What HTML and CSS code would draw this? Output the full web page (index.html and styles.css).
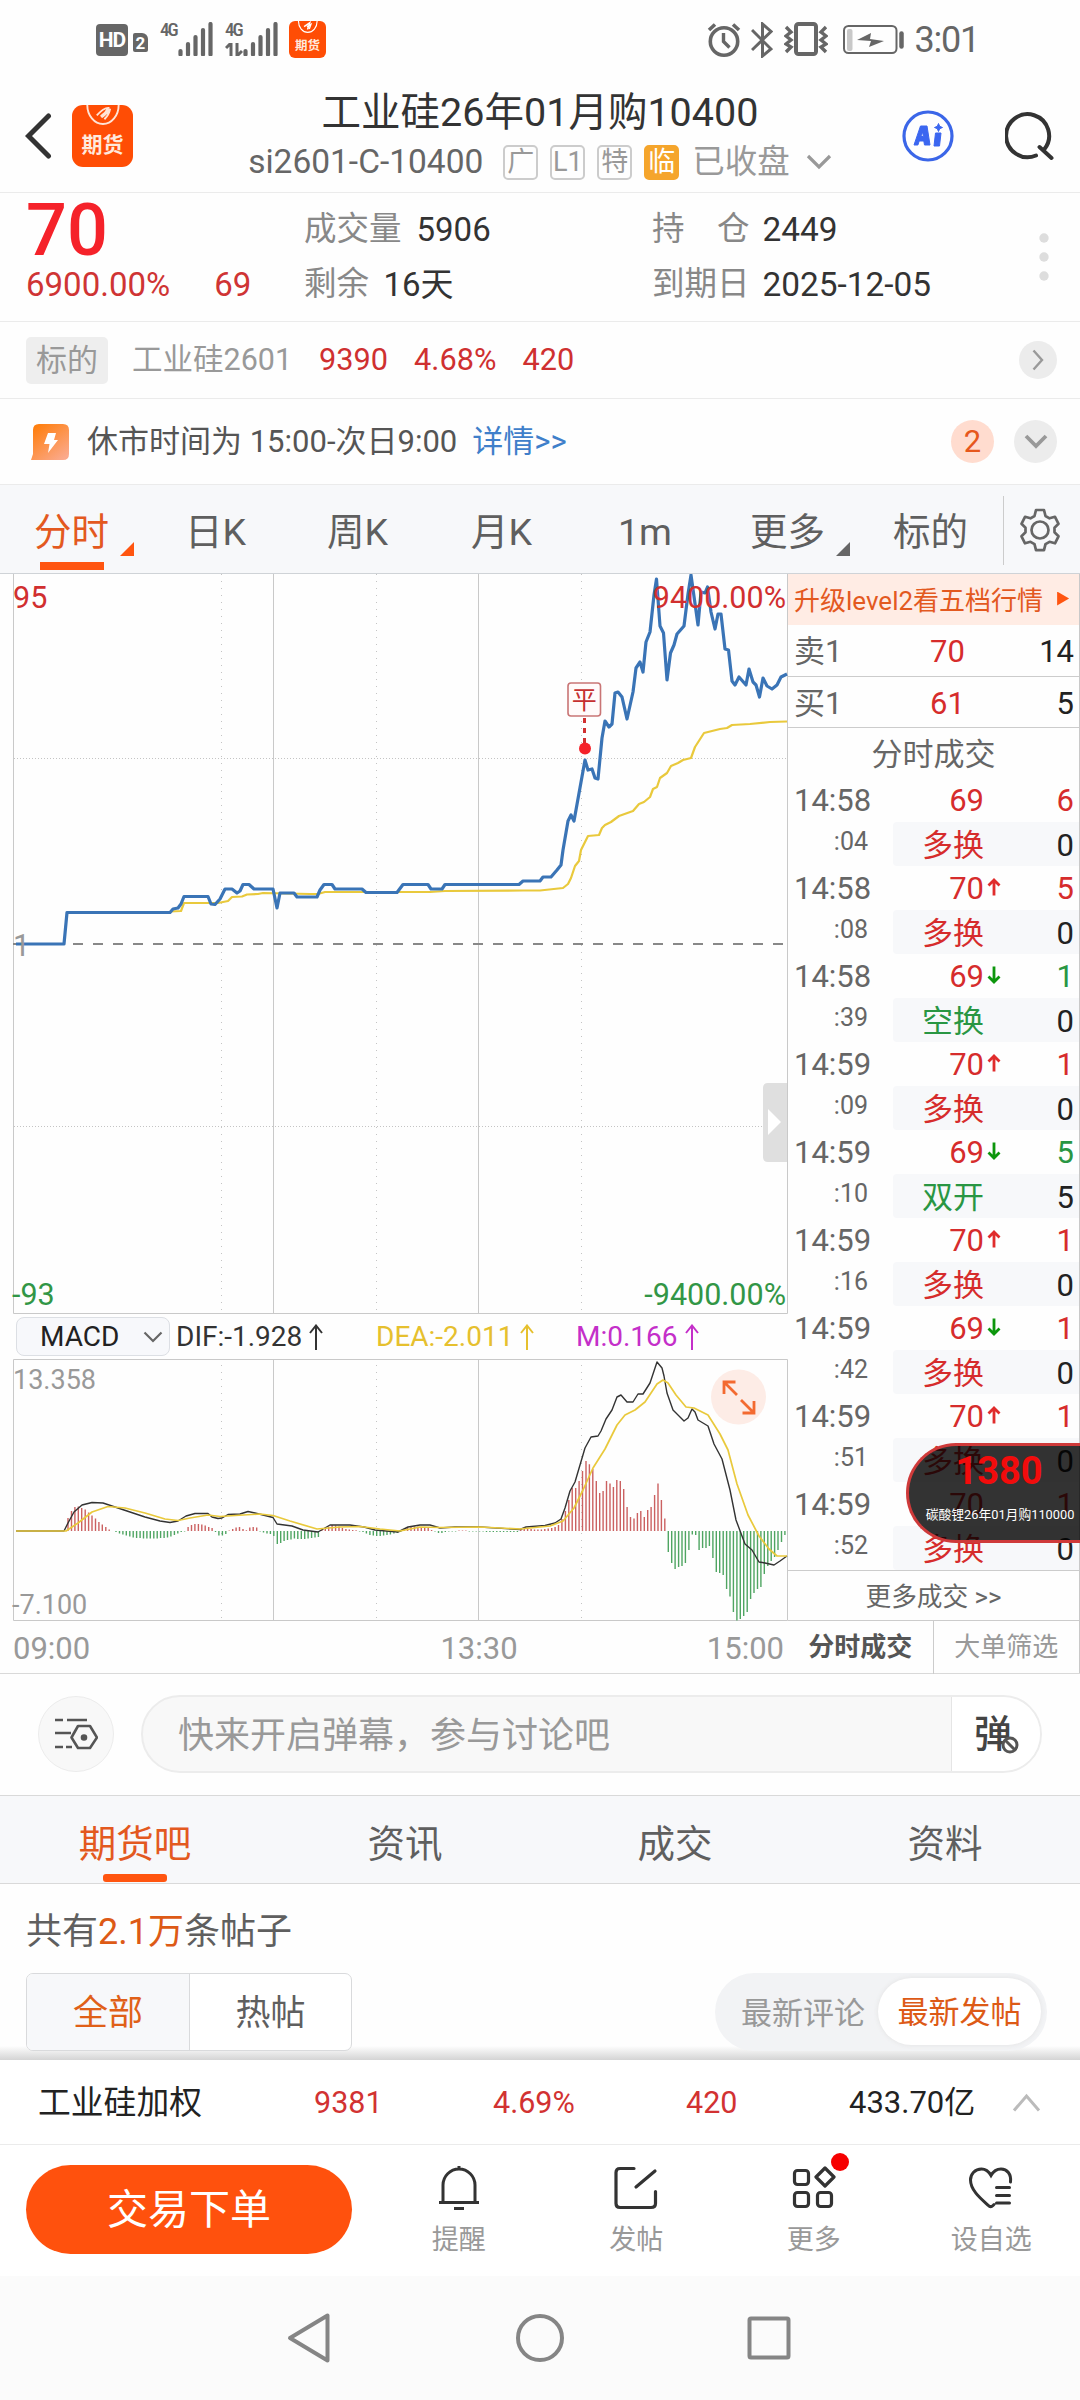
FILE: index.html
```html
<!DOCTYPE html>
<html lang="zh-CN">
<head>
<meta charset="utf-8">
<title>工业硅26年01月购10400</title>
<link rel="stylesheet" href="styles.css">
</head>
<body>
<svg class="defs" width="0" height="0">
  <symbol id="up" viewBox="0 0 14 18"><path d="M7 17.500V2M1.500 7.500L7 2l5.500 5.500" fill="none" stroke="#e02c2c" stroke-width="2.800"/></symbol>
  <symbol id="down" viewBox="0 0 14 18"><path d="M7 .500V16M1.500 10.500L7 16l5.500-5.500" fill="none" stroke="#0d960d" stroke-width="2.800"/></symbol>
  <symbol id="thin-up" viewBox="0 0 14 26"><path d="M7 26V1.500M1 9L7 1.500 13 9" fill="none" stroke="currentColor" stroke-width="2"/></symbol>
  <symbol id="bars" viewBox="0 0 36 34"><path d="M2.500 29v3.500M10 22v10.500M17.500 15v17.500M25 8v24.500M32.500 2v30.500" stroke="#666" stroke-width="4.200" stroke-linecap="round"/></symbol>
</svg>

<header class="status">
  <span class="hd">HD</span><span class="sim">2</span>
  <span class="g4">4G</span><svg class="bars" width="36" height="34"><use href="#bars"/></svg>
  <span class="g4 second">4G<svg width="18" height="13" viewBox="0 0 18 13"><path d="M1 5l5-5v13M17 8l-5 5V0" fill="none" stroke="#666" stroke-width="3"/></svg></span><svg class="bars" width="36" height="34"><use href="#bars"/></svg>
  <span class="app small"><svg viewBox="0 0 60 30"><path d="M14 0a16.500 20 0 0 0 33 0" fill="none" stroke="#fff" stroke-width="2"/><path d="M24 10l10-7-4 12M29 10l7-4-3 8" fill="none" stroke="#fff" stroke-width="2.500"/></svg><b>期货</b></span>
  <span class="spring"></span>
  <svg width="34" height="35" viewBox="0 0 34 35" fill="none" stroke="#666"><circle cx="17" cy="19.500" r="13.700" stroke-width="3.600"/><path d="M16.500 11v8.500l6 6" stroke-width="3.400"/><path d="M2 8l6-5.500M32 8l-6-5.500" stroke-width="3.600"/></svg>
  <svg class="bt" width="22" height="36" viewBox="0 0 22 36" fill="none" stroke="#666" stroke-width="3"><path d="M1 8l19 19-8.500 7V2L20 9.500 1 28"/></svg>
  <svg class="vib" width="44" height="34" viewBox="0 0 44 34" fill="none" stroke="#666"><rect x="12" y="2" width="20" height="30" rx="2.500" stroke-width="4"/><path d="M2 5l5 5-5 4 5 4-5 4 5 3-5 5M42 5l-5 5 5 4-5 4 5 4-5 3 5 5" stroke-width="3.400"/></svg>
  <svg class="bat" width="62" height="30" viewBox="0 0 62 30"><rect x="1" y="1" width="52.500" height="27" rx="4.500" fill="none" stroke="#666" stroke-width="2"/><rect x="4" y="4" width="5.500" height="22" rx="2" fill="#c8c8c8"/><path d="M14 15L28 8l-1 6 14 2-15 6 2-6z" fill="#666"/><path d="M58.500 8.500v13" stroke="#666" stroke-width="4.500" stroke-linecap="round"/></svg>
  <time>3:01</time>
</header>

<section class="head">
  <div class="side">
    <svg width="27" height="46" viewBox="0 0 27 46"><path d="M23.500 3L3.500 23l20 20" fill="none" stroke="#333" stroke-width="5" stroke-linecap="round"/></svg>
    <span class="app"><svg viewBox="0 0 60 30"><path d="M14 0a16.500 20 0 0 0 33 0" fill="none" stroke="#ffe3d6" stroke-width="2"/><path d="M24 11q7-8 12-8-3 6-8 9m1 1q4-2 9-9-1 6-6 11" fill="none" stroke="#ffe3d6" stroke-width="2"/></svg><b>期货</b></span>
  </div>
  <div class="title">
    <h1>工业硅26年01月购10400</h1>
    <p>si2601-C-10400<i class="tag first">广</i><i class="tag">L1</i><i class="tag">特</i><i class="tag temp">临</i><span class="closed">已收盘</span><svg width="26" height="16" viewBox="0 0 26 16"><path d="M2 2l11 11L24 2" fill="none" stroke="#999" stroke-width="3.200"/></svg></p>
  </div>
  <div class="side right">
    <svg width="52" height="54" viewBox="0 0 52 54"><circle cx="26" cy="27" r="24" fill="none" stroke="#3b66e8" stroke-width="3.200"/><path d="M12 36L18.500 17h6.500l3 19h-5.500l-.700-4h-4.600l-1.300 4zM18.800 27.500h2.500l-.500-4.500zM33.500 24h5.500l-1.500 13h-5.500zM36.500 14.500l1.200 2.800 2.800 1.200-2.800 1.200-1.200 2.800-1.200-2.800-2.800-1.200 2.800-1.200z" fill="#3b66f0" stroke="#3b66f0"/></svg>
    <svg class="search" width="50" height="50" viewBox="0 0 50 50"><path d="M31 44.500A21.500 21.500 0 1 1 39.500 38M34.500 36L46.500 47" fill="none" stroke="#333" stroke-width="4" stroke-linecap="round"/></svg>
  </div>
</section>

<section class="quote">
  <div class="now"><strong>70</strong><p><span>6900.00%</span><span>69</span></p></div>
  <dl><dt>成交量</dt><dd>5906</dd><dt>剩余</dt><dd class="close">16天</dd></dl>
  <dl class="oi"><dt class="wide"><span>持</span><span>仓</span></dt><dd>2449</dd><dt>到期日</dt><dd>2025-12-05</dd></dl>
  <svg width="10" height="50" viewBox="0 0 10 50" fill="#ddd"><circle cx="5" cy="6" r="4.700"/><circle cx="5" cy="25" r="4.700"/><circle cx="5" cy="44" r="4.700"/></svg>
</section>

<section class="under">
  <span class="badge">标的</span><span class="uname">工业硅2601</span><span class="red">9390</span><span class="red">4.68%</span><span class="red">420</span>
  <span class="round"><svg width="12" height="22" viewBox="0 0 12 22"><path d="M1.500 1.500L10 11l-8.500 9.500" fill="none" stroke="#999" stroke-width="2.400"/></svg></span>
</section>

<section class="notice">
  <svg width="38" height="38" viewBox="0 0 38 38"><defs><linearGradient id="bolt" x1="0" y1="0" x2=".8" y2="1"><stop offset="0" stop-color="#ff7a00"/><stop offset="1" stop-color="#fba98b"/></linearGradient></defs><path d="M8 1h24q6 0 6 6v24q0 6-6 6H0l2-6V7q0-6 6-6z" fill="url(#bolt)"/><path d="M17 10h8l-2 7h4L17 30l1.500-9H13z" fill="#fff"/></svg>
  <span class="msg">休市时间为 15:00-次日9:00</span><a>详情&gt;&gt;</a>
  <span class="round count">2</span>
  <span class="round big"><svg width="24" height="16" viewBox="0 0 24 16"><path d="M2 2l10 10L22 2" fill="none" stroke="#999" stroke-width="3.800"/></svg></span>
</section>

<nav class="periods">
  <span class="on">分时</span><i class="tri on"></i><span>日K</span><span>周K</span><span>月K</span><span>1m</span><span>更多</span><i class="tri"></i><span>标的</span>
  <b class="rule"></b>
  <svg width="40" height="44" viewBox="0 0 40 44" fill="none" stroke="#666" stroke-width="2.700" stroke-linejoin="round"><path d="M16 2h8l1.500 6 4 2.300 5.500-1.500 3.500 7-4 4v4.500l4 4-3.500 7-5.500-1.500-4 2.300-1.500 6h-8l-1.500-6-4-2.300L5 35.300l-3.500-7 4-4v-4.500l-4-4 3.500-7 5.500 1.500 4-2.300z"/><circle cx="20" cy="22" r="8.500"/></svg>
</nav>

<main class="market">
  <div class="charts">
    <svg class="plot" width="788" height="740" viewBox="0 574 788 740">
      <path class="grid" d="M13.500 574V1313.500H787.500V574M273.500 574V1313M478.500 574V1313"/>
      <path class="dots" d="M221.500 574V1312M376.500 574V1312M581.500 574V1312"/>
      <path class="hdots" d="M14 758.500H787M14 1126.500H787"/>
      <path d="M13 944H787" stroke="#888" stroke-width="2" stroke-dasharray="10 10"/>
      <path class="avg" d="M170 911.500L181 911 184 903H218L228 901 232 897 242 896.500 247 894.500 258 894 263 893 310 894H318L325 892H430L445 891 523 890.500H540L563 888 568 884 571 878 575 866 579 861 581 850 585 842 588 836 599 835 602 828 605 825 611 822 619 816 633 811 639 804 644 802 650 797 653 789 657 787 660 778 667 773 671 766 678 763 683 760 691 758 695 747 704 733 720 729 727 728 732 725 750 724 770 722 787 721.500"/>
      <path class="price" d="M16 944H64L67 912.500H170L173 909 178 908 181 904 184 896.500H208L211 904 215 904.500 220 899 225 889H232L237 893 240 891 243 884.500H249L254 889H273L277 908 280 893H294L297 897H317L320 890 324 884.500H332L335 889H362L366 892.500H397L403 884.500H428L431 889H442L445 884.500H519L523 881H540L543 877H551L557 870 561 865 563 850 568 821 571 815 574 821 585 760 588 770 592 769 595 778 598 779 602 738 605 721 609 727 612 724 615 693 618 692 622 697 627 719 633 692 636 668 640 662 643 672 646 642 650 632 654 595 656.500 579 660 626 663.500 633 667 680 670.500 653 674 645 677 634 684 626 688 594 691 575 698 625 701 592 705 593 707.500 587 711 612 715 629 718 614H721L725 649 728.500 650 732 681 735 685 739 677 746 685 749 669 753 682 756 685 759.500 697 763 678 767 686 772 689 777 685 781 677 787 674"/>
      <text class="lb up" x="13" y="607.500">95</text><text class="lb up" x="786" y="607.500" text-anchor="end">9400.00%</text>
      <text class="lb dn" x="12" y="1304.500">-93</text><text class="lb dn" x="786" y="1304.500" text-anchor="end">-9400.00%</text>
      <text class="lb gray" x="13" y="956">1</text>
      <path d="M584.500 718V743" stroke="#d03030" stroke-width="3" stroke-dasharray="5 5"/><circle cx="585" cy="748.500" r="6" fill="#f5222a"/>
      <rect x="568" y="683" width="32.500" height="33" rx="3" fill="#fffafa" stroke="#c97575" stroke-width="1.600"/>
      <text class="flat" x="584.200" y="708.500" text-anchor="middle">平</text>
      <path d="M787 1083H768q-5 0-5 5v69q0 5 5 5h19z" fill="#dfdfdf"/><path d="M768 1109l13 13-13 13z" fill="#fff"/>
    </svg>
    <div class="macd">
      <span class="pick">MACD<svg width="20" height="12" viewBox="0 0 20 12"><path d="M1.500 1.500L10 10l8.500-8.500" fill="none" stroke="#666" stroke-width="2.200"/></svg></span>
      <span class="dif">DIF:-1.928<svg width="14" height="26"><use href="#thin-up"/></svg></span>
      <span class="dea">DEA:-2.011<svg width="14" height="26"><use href="#thin-up"/></svg></span>
      <span class="m">M:0.166<svg width="14" height="26"><use href="#thin-up"/></svg></span>
    </div>
    <svg class="plot" width="788" height="262" viewBox="0 1359 788 262">
      <path class="grid" d="M13.500 1359.500H787.500V1620.500H13.500zM273.500 1359V1620M478.500 1359V1620"/>
      <path class="dots" d="M221.500 1365V1619M376.500 1365V1619M581.500 1365V1619"/>
      <path id="gain" stroke="#cb6161" stroke-width="1.400"/><path id="loss" stroke="#4fa562" stroke-width="1.400"/>
      <path class="dif-line" d="M16 1531H64L68 1523 74 1512 82 1505 92 1502.500 103 1503 115 1507 130 1512 145 1517 160 1521 170 1522.500 178 1521 186 1516 195 1513.500H208L212 1517 218 1518.500 222 1518 228 1514.500 240 1514 248 1511.500 255 1513 273 1517.500 277 1524 292 1526 303 1530 318 1532 330 1525H350L364 1527 375 1530 398 1532 408 1527 420 1525H430L440 1528 455 1527H480L520 1529.500 526 1527 545 1525.500 555 1523 561 1519 565 1508 570 1491 575 1482 580 1465 585 1448 591 1437 598 1436 601 1431 606 1419 612 1410 617 1397 621 1395 627 1402H633L638 1394H643L650 1383 657 1362 662 1368 664 1376 667 1393 673 1410 684 1421 688 1418 692 1409 695 1412 698 1420 708 1426 714 1444 722 1459 730 1490 736 1520 745 1544 752 1550 759 1562 765 1563 774 1565 780 1561 787 1556"/>
      <path class="avg" d="M16 1531H66L78 1523 92 1512 108 1506.500 125 1508 145 1513 165 1519 178 1520.500 190 1518 208 1515 220 1516.500 235 1515.500 260 1514 273 1515.500 290 1521 317 1529 340 1527 360 1526.500 380 1529 400 1531 420 1527 440 1527.500 480 1527 520 1529 550 1526 563 1521 574 1508 583 1490 593 1468 605 1449 617 1425 625 1415 635 1410 645 1402 651 1393 657 1384 663 1380 668 1383 676 1395 686 1407 694 1408 708 1415 720 1434 728 1450 737 1484 748 1515 759 1536 769 1549 777 1556H787"/>
      <text class="sm gray" x="13" y="1389">13.358</text><text class="sm gray" x="12" y="1614">-7.100</text>
      <circle cx="738.500" cy="1397" r="27.500" fill="#fdece6"/>
      <path d="M737 1395L724 1382M724 1394V1382H735.500M741 1400L754 1413M754 1401V1413H742.500" fill="none" stroke="#f36a30" stroke-width="2.800"/>
    </svg>
    <div class="axis"><span>09:00</span><span>13:30</span><span>15:00</span></div>
  </div>

  <aside class="book">
    <div class="upsell">升级level2看五档行情<i></i></div>
    <div class="level ask"><span>卖1</span><b>70</b><em>14</em></div>
    <div class="level"><span>买1</span><b>61</b><em>5</em></div>
    <h2>分时成交</h2>
    <div class="trades">
      <div class="r"><time>14:58</time><b>69</b><em>6</em></div><div class="s"><time>:04</time><p><b>多换</b><em>0</em></p></div>
      <div class="r"><time>14:58</time><b>70</b><svg><use href="#up"/></svg><em>5</em></div><div class="s"><time>:08</time><p><b>多换</b><em>0</em></p></div>
      <div class="r"><time>14:58</time><b>69</b><svg><use href="#down"/></svg><em class="g">1</em></div><div class="s"><time>:39</time><p><b class="g">空换</b><em>0</em></p></div>
      <div class="r"><time>14:59</time><b>70</b><svg><use href="#up"/></svg><em>1</em></div><div class="s"><time>:09</time><p><b>多换</b><em>0</em></p></div>
      <div class="r"><time>14:59</time><b>69</b><svg><use href="#down"/></svg><em class="g">5</em></div><div class="s"><time>:10</time><p><b class="g">双开</b><em>5</em></p></div>
      <div class="r"><time>14:59</time><b>70</b><svg><use href="#up"/></svg><em>1</em></div><div class="s"><time>:16</time><p><b>多换</b><em>0</em></p></div>
      <div class="r"><time>14:59</time><b>69</b><svg><use href="#down"/></svg><em>1</em></div><div class="s"><time>:42</time><p><b>多换</b><em>0</em></p></div>
      <div class="r"><time>14:59</time><b>70</b><svg><use href="#up"/></svg><em>1</em></div><div class="s"><time>:51</time><p><b>多换</b><em>0</em></p></div>
      <div class="r"><time>14:59</time><b>70</b><em>1</em></div><div class="s"><time>:52</time><p><b>多换</b><em>0</em></p></div>
    </div>
    <div class="more">更多成交 &gt;&gt;</div>
    <div class="switch"><b>分时成交</b><span>大单筛选</span></div>
    <div class="float"><strong>1380</strong><span>碳酸锂26年01月购110000</span></div>
  </aside>
</main>

<section class="danmu">
  <span class="set"><svg width="44" height="34" viewBox="0 0 44 34" fill="none" stroke="#555" stroke-width="2.600"><path d="M1 3h8M13 3h20M1 16h16M1 30h8M12 30h6"/><path d="M24 9h12l7 11.500L36 31H24l-6.500-10.500z" stroke-linejoin="round"/><circle cx="30" cy="20.500" r="2" fill="#555"/></svg></span>
  <div class="field"><span>快来开启弹幕，参与讨论吧</span><b>弹<svg width="18" height="18" viewBox="0 0 18 18"><circle cx="9" cy="9" r="7" fill="#fff" stroke="#555" stroke-width="3"/><path d="M4.500 4.500l9 9" stroke="#555" stroke-width="3"/></svg></b></div>
</section>

<nav class="tabs"><span class="on">期货吧</span><span>资讯</span><span>成交</span><span>资料</span></nav>

<section class="posts">
  <p>共有<b>2.1万</b>条帖子</p>
  <div class="filters">
    <div class="seg"><b>全部</b><span>热帖</span></div>
    <div class="sort"><span>最新评论</span><b>最新发帖</b></div>
  </div>
</section>

<section class="index"><span>工业硅加权</span><b>9381</b><b>4.69%</b><b>420</b><em>433.70亿</em><svg width="29" height="20" viewBox="0 0 29 20"><path d="M2 17.500L14.500 3 27 17.500" fill="none" stroke="#bbb" stroke-width="3"/></svg></section>

<footer class="actions">
  <button>交易下单</button>
  <span><svg width="44" height="46" viewBox="0 0 44 46" fill="none" stroke="#333" stroke-width="3"><path d="M22 1v4M2 37.500h40M6 37V20a16 16 0 0 1 32 0v17M17 43.500h10"/></svg>提醒</span>
  <span><svg width="44" height="46" viewBox="0 0 44 46" fill="none" stroke="#333" stroke-width="3.200" stroke-linecap="round"><path d="M20 3.500H6q-4 0-4 4v31q0 4 4 4h31q4.500 0 4.500-4V26.500M41 6L22 22"/></svg>发帖</span>
  <span><svg width="44" height="46" viewBox="0 0 44 46" fill="none" stroke="#333" stroke-width="3.200" stroke-linejoin="round"><rect x="2.500" y="5.500" width="14" height="14" rx="3"/><rect x="2.500" y="27.500" width="14" height="14" rx="3"/><rect x="25.500" y="27.500" width="14" height="14" rx="3"/><path d="M33 3l9 9-9 9-9-9z"/></svg>更多<i class="dot"></i></span>
  <span><svg width="44" height="46" viewBox="0 0 44 46" fill="none" stroke="#333" stroke-width="3" stroke-linecap="round"><path d="M41.500 17C42.500 9 38 4 32 4c-4 0-7.500 2-10 6.500C19.500 6 16 4 12.500 4 6 4 1.500 9 1.500 15c0 11 12 20 18.500 26q2 1.500 4-.500l1-1M27.500 22.500h13M27.500 30.500h13M27.500 38h13"/></svg>设自选</span>
</footer>

<nav class="system">
  <svg width="46" height="52" viewBox="0 0 46 52"><path d="M41.500 3.500v45L4 26z" fill="none" stroke="#858585" stroke-width="4" stroke-linejoin="round"/></svg>
  <svg width="50" height="50" viewBox="0 0 50 50"><circle cx="25" cy="25" r="22" fill="none" stroke="#858585" stroke-width="4"/></svg>
  <svg width="44" height="44" viewBox="0 0 44 44"><rect x="2.500" y="2.500" width="39" height="39" rx="1.500" fill="none" stroke="#858585" stroke-width="4"/></svg>
</nav>
<script src="macd.js"></script>
</body>
</html>
```
FILE: styles.css
```css
* { box-sizing: border-box; margin: 0; padding: 0; }
body { width: 1080px; height: 2400px; background: #fefefe; font-family: Roboto, "Noto Sans CJK SC", sans-serif; color: #333; overflow: hidden; }
svg { display: block; flex: none; }
i, em { font-style: normal; }
h1, h2, b { font-weight: 400; }
span, b, em, time { white-space: nowrap; }
.defs { position: absolute; }
.red { color: #cf3030; }

.status { height: 80px; display: flex; align-items: flex-start; padding: 22px 101px 0 96px; color: #666; }
.hd { width: 32px; height: 32px; margin-top: 2px; border-radius: 4px; background: #666; color: #fff; font: 700 21px/32px Roboto; text-align: center; letter-spacing: -1px; }
.sim { width: 15px; height: 19px; margin: 11px 12px 0 5px; border-radius: 2px; background: #666; color: #fff; font: 700 17px/20px Roboto; text-align: center; border-top-right-radius: 6px; }
.g4 { width: 19px; font: 500 19px/16px "Roboto Condensed", Roboto; letter-spacing: -2px; }
.g4 svg { margin-top: 5px; }
.second { margin-left: 11px; }
.bars { margin-left: -1px; }
.spring { flex: 1; }
.bt { margin-left: 10px; } .vib { margin-left: 11px; } .bat { margin: 3px 9px 0 15px; }
.status time { font-size: 36px; line-height: 37px; letter-spacing: -1.200px; }
.app { width: 61px; height: 62px; border-radius: 11px; background: #ff4d05; color: #ffe9dd; display: flex; flex-direction: column; align-items: center; overflow: hidden; }
.app svg { width: 100%; height: 46%; }
.app b { font-size: 21px; line-height: 23px; font-weight: 700; }
.app.small { width: 37px; height: 37px; margin: -1px 0 0 10px; border-radius: 6px; }
.app.small b { font-size: 12.500px; line-height: 15px; }

.head { height: 113px; display: flex; border-bottom: 1px solid #ebebeb; }
.side { width: 200px; display: flex; align-items: center; padding-left: 25px; }
.side .app { margin-left: 20px; }
.side.right { padding-left: 22px; }
.search { margin-left: 51px; }
.title { flex: 1; display: flex; flex-direction: column; align-items: center; padding-top: 8px; }
.title h1 { font-size: 39.500px; line-height: 49px; white-space: nowrap; }
.title p { display: flex; align-items: center; font-size: 33.500px; line-height: 50px; color: #666; white-space: nowrap; }
.tag { width: 35px; height: 35px; margin-left: 12px; border: 2px solid #ccc; border-radius: 5px; font-size: 27px; line-height: 30px; color: #999; text-align: center; }
.tag.first { margin-left: 20px; }
.tag.temp { background: #f5a52c; border-color: #f5a52c; color: #fff; }
.closed { margin: 0 16px 0 13px; font-size: 32.500px; color: #999; }

.quote { height: 129px; display: flex; border-bottom: 1px solid #ebebeb; font-size: 33px; }
.now { width: 304px; padding: 2px 0 0 26px; color: #cf3434; }
.now strong { display: block; font-size: 72px; line-height: 72px; font-weight: 500; color: #f5222a; }
.now p { display: flex; line-height: 36px; }
.now span + span { margin-left: 44px; }
.quote dl { width: 348px; display: grid; grid-template-columns: auto 1fr; grid-auto-rows: 55px; column-gap: 15px; line-height: 55px; padding-top: 9px; }
.quote dl dt { color: #888; font-size: 32.500px; }
.quote dd.close { margin-left: -33px; }
.quote dl.oi { width: 387px; column-gap: 13px; }
.oi dd { font-size: 33.400px; }
.wide { display: flex; justify-content: space-between; }
.quote > svg { margin: 39px 0 0; }

.under { height: 77px; display: flex; align-items: center; border-bottom: 1px solid #ebebeb; padding: 0 23px 0 26px; font-size: 31px; line-height: 40px; }
.badge { width: 82px; height: 47px; line-height: 47px; border-radius: 5px; background: #eee; color: #999; text-align: center; }
.uname { color: #999; margin: 0 27px 0 24px; font-size: 30.500px; }
.under .red { margin-right: 26px; font-size: 30.700px; }
.round { display: flex; align-items: center; justify-content: center; width: 38px; height: 38px; border-radius: 50%; background: #ececec; margin-left: auto; }

.notice { height: 86px; display: flex; align-items: center; border-bottom: 1px solid #ebebeb; padding: 0 23px 0 31px; font-size: 31px; line-height: 40px; color: #555; }
.msg { margin: 0 15px 0 18px; }
.notice a { color: #3f7fca; }
.notice .round { width: 43px; height: 43px; }
.notice .count { background: #ffdccf; color: #e6571d; }
.notice .big { margin-left: 20px; }

.periods { height: 89px; display: grid; grid-template-columns: 85px 65px 142px 144px 147px 132px 86px 57px 110px 35px auto; align-items: center; padding-left: 35px; background: #f7f8fa; border-bottom: 1px solid #cfd3d7; font-size: 37.500px; line-height: 85px; color: #5f5f5f; }
.periods span { align-self: stretch; padding-top: 5px; }
.periods span.on { margin-left: -1px; color: #e3591f; background: linear-gradient(#ff5510, #ff5510) 6px 77px / 64px 8px no-repeat; }
.tri { width: 14px; height: 14px; margin-top: 38px; background: #666; clip-path: polygon(100% 0, 100% 100%, 0 100%); }
.tri.on { background: #ff5510; }
.rule { width: 1px; height: 69px; background: #ccc; }
.periods svg { margin-left: -18px; }

.market { display: flex; height: 1100px; border-bottom: 1px solid #d9d9d9; }
.charts { width: 788px; }
.grid { fill: none; stroke: #c9c9c9; stroke-width: 1; }
.dots { stroke: #c4c4c4; stroke-width: 1; stroke-dasharray: 1 6; }
.hdots { stroke: #c4c4c4; stroke-width: 1; stroke-dasharray: 1 2; }
.avg { fill: none; stroke: #e9c93c; stroke-width: 2.200; stroke-linejoin: round; }
.price { fill: none; stroke: #3a74b6; stroke-width: 3.200; stroke-linejoin: round; }
.dif-line { fill: none; stroke: #333; stroke-width: 1.400; stroke-linejoin: round; }
#gain + #loss ~ .avg { stroke-width: 1.700; }
.lb { font-size: 30.500px; } .sm { font-size: 27px; }
.up { fill: #d12f2f; } .dn { fill: #329646; } .gray { fill: #999; }
.flat { font-size: 25px; fill: #c52f2f; }
.macd { height: 45px; display: grid; grid-template-columns: 160px 200px 200px auto; align-items: center; padding-left: 16px; font-size: 28px; line-height: 36px; }
.macd span { display: flex; align-items: center; }
.macd span svg { margin-left: 7px; }
.pick { width: 154px; height: 39px; padding-left: 23px; border: 1.500px solid #dcdfe4; border-radius: 8px; background: #f7f8fb; color: #222; }
.macd .pick svg { margin-left: 24px; }
.dea { color: #e6c02e; } .m { color: #c42fc9; }
.axis { height: 53px; display: flex; justify-content: space-between; padding: 2px 4px 0 13px; font-size: 31px; line-height: 51px; color: #999; }
.axis span:nth-child(2) { margin-left: 161px; }

.book { position: relative; width: 292px; border-right: 1px solid #c9c9c9; }
.upsell { height: 51px; display: flex; align-items: center; padding: 0 0 2px 6px; background: #ffece4; color: #e3591f; font-size: 26px; }
.upsell i { width: 12px; height: 14px; margin-left: 14px; background: #ff5510; clip-path: polygon(0 0, 100% 50%, 0 100%); }
.level, .r, .s, .s p { display: flex; font-size: 31px; }
.level { height: 51px; line-height: 53px; border-bottom: 1px solid #ccc; padding: 0 5px 0 6px; color: #666; }
.level.ask { height: 52px; line-height: 54px; }
.level span { width: 136px; }
.book b { color: #d62c2c; } .book em { margin-left: auto; color: #222; }
.book h2 { height: 50px; line-height: 53px; font-size: 31px; text-align: center; color: #666; }
.trades { height: 792px; }
.r, .s { height: 44px; line-height: 46px; padding-left: 6px; }
.r { padding-right: 5px; }
.r time { width: 74px; margin-right: 1px; color: #666; text-align: right; }
.r b, .book .s b { width: 91px; text-align: right; }
.r b { margin-left: 24px; }
.r svg { width: 14px; height: 18px; margin: 12px 0 0 3px; }
.book .r em { color: #d62c2c; }
.book .g, .book .r em.g { color: #299643; }
.s time { width: 74px; margin-right: 1px; font-size: 25px; line-height: 39px; color: #666; text-align: right; }
.s p { flex: 1; margin-left: 24px; padding-right: 5px; line-height: 47px; background: #f7f8fa; border-radius: 4px 0 0 4px; }
.more { height: 51px; line-height: 52px; border: solid #ccc; border-width: 1px 0; text-align: center; font-size: 25.700px; color: #666; }
.switch { display: grid; grid-template-columns: 1fr 1fr; height: 52px; line-height: 53px; font-size: 26px; text-align: center; color: #999; }
.book .switch b { color: #555; font-weight: 700; border-right: 1px solid #ccc; }
.float { position: absolute; left: 118px; top: 869px; width: 174px; height: 100px; border: 3px solid #cf3a3a; border-right: 0; border-radius: 50px 0 0 50px; background: rgba(0,0,0,.8); color: #fff; text-align: center; font-size: 12.800px; padding-top: 3px; }
.float strong { display: block; padding-left: 9px; color: #f20c0c; font: 700 38px/44px Roboto; }
.float span { display: block; padding: 13px 0 0 11px; line-height: 17px; }

.danmu { height: 122px; display: flex; align-items: center; padding: 0 38px; border-bottom: 1px solid #d9d9d9; }
.set { width: 76px; height: 76px; margin-top: -2px; border: 1.500px solid #ececec; border-radius: 50%; background: #f8f8f8; display: flex; align-items: center; justify-content: center; }
.field { display: flex; width: 901px; height: 78px; margin: -2px 0 0 27px; border: 2px solid #ececec; border-radius: 39px; overflow: hidden; background: #f8f8f8; font-size: 36px; line-height: 78px; color: #999; padding-left: 35px; }
.field b { position: relative; width: 89px; margin-left: auto; border-left: 1px solid #e5e5e5; background: #fff; color: #444; font-weight: 500; font-size: 38px; line-height: 74px; padding-left: 22px; }
.field b svg { position: absolute; left: 49px; top: 39px; }

.tabs { height: 88px; display: grid; grid-template-columns: repeat(4, 1fr); background: #f7f8fa; border-bottom: 1px solid #d9d9d9; font-size: 37.500px; line-height: 96px; text-align: center; color: #5f5f5f; }
.tabs .on { position: relative; color: #e3591f; }
.tabs .on::after { content: ""; position: absolute; left: 103px; top: 78px; width: 64px; height: 8px; border-radius: 3px; background: #ff5510; }

.posts { height: 176px; background: linear-gradient(transparent 162px, #d4d4d4 176px); padding: 0 33px 0 26px; }
.posts p { font-size: 36px; line-height: 50px; padding: 23px 0 16px; color: #5f5f5f; }
.posts p b { color: #dd5a16; }
.filters { display: flex; justify-content: space-between; }
.seg { display: grid; grid-template-columns: 163px 161px; height: 78px; border: 1px solid #d9dadc; border-radius: 7px; background: #fff; overflow: hidden; font-size: 35px; line-height: 79px; text-align: center; color: #5f5f5f; }
.seg b { color: #e06018; background: #f7f8fa; border-right: 1px solid #d9dadc; }
.sort { display: flex; width: 332px; height: 78px; padding: 5px 6px 6px 26px; border-radius: 39px; background: #f2f3f5; font-size: 31px; color: #999; line-height: 72px; }
.sort b { width: 163px; margin-left: auto; border-radius: 34px; background: #fff; box-shadow: 0 0 5px #e2e2e2; text-align: center; color: #dd5a16; line-height: 70px; }

.index { height: 85px; display: grid; grid-template-columns: 276px 179px 193px 163px 163px auto; align-items: center; background: #fff; padding: 1px 0 0 38px; border-bottom: 1px solid #ebebeb; font-size: 30.500px; line-height: 40px; color: #222; }
.index span { font-size: 32.800px; } .index b { color: #d23232; }
.index em { font-size: 31px; }

.actions { height: 131px; display: flex; background: #fff; padding-left: 26px; color: #999; font-size: 27px; }
.actions button { width: 326px; height: 89px; margin: 20px 18px 0 0; border: 0; border-radius: 45px; background: #ff510d; color: #fff; font: 41px/91px Roboto, "Noto Sans CJK SC", sans-serif; }
.actions span { position: relative; width: 177.500px; display: flex; flex-direction: column; align-items: center; padding-top: 20px; line-height: 59px; }
.dot { position: absolute; left: 106px; top: 8px; width: 18px; height: 18px; border-radius: 50%; background: #f60000; }

.system { height: 124px; display: flex; align-items: center; background: #fbfbfb; padding-left: 286px; }
.system svg:nth-child(2) { margin-left: 183px; } .system svg:nth-child(3) { margin-left: 182px; }
```
FILE: macd.js
```js
// Histogram bar heights in pixels above (+) or below (-) the zero line, one per minute.
const bars = [
  0,0,0,0,0,0,0,0,0,0,0,0,0,0,0,
  13,20,24,24.5,23,21.5,18.5,15.5,12.5,9,6.5,4,1.5,0,
  -1,-2.5,-3.5,-4.5,-5.5,-6.5,-7,-7,-7.5,-7.5,-7.5,-7.5,-7.5,-7,-7,-6.5,-5.5,-4,-2.5,-1,-.5,
  4,6,7,7,6.5,5.5,4,3,-1,-4.5,-4.5,-3,.5,2,3.5,4,2,.7,3.5,4,3.5,
  -.5,-1.5,-2.5,-3,-5,-13,-12,-10,-9,-8.5,-7.5,-8,-8,-8,-7.5,-7,-6.5,-6,
  1,3,4.5,6,5.5,4.5,3,2,1.5,1,.7,-.5,-1,-2.5,-4,-4.5,-5,-5,-4.5,-4,-3.5,-2.5,-2,-1,
  1.5,3.5,4.5,4.5,4.5,4,3.5,3,1,-.5,-2,-2,-1,-.5,-.5,-.5,.5,.5,.5,-.5,-.5,-.5,-.5,-.5,
  -1,-1,-1,-1,-1,-1,-1,-1,-1,-1,2,2,2,2,1.5,1.5,1.5,2,2.5,3,4,6,
  12,20,31,43,43,50,60,70,66.7,62,50,38,40,50,47.5,44,51,50,42,24,14,12.5,18,20,14,21,24,36,47.5,31,12.5,
  -21,-32,-38,-36,-35,-32,-19,-3.5,-4,-19,-17,-17,-15,-27,-41,-42,-44,-58,-65.5,-81,-89.5,-88,-85,-81,
  -68,-62,-58,-56,-43,-35,-30,-26,-19,-11,-4
];
const step = 3.43, zero = 1531, first = 784.9 - (bars.length - 1) * step;
const draw = (id, keep) => document.getElementById(id).setAttribute('d',
  bars.map((h, i) => keep(h) ? `M${(first + i * step).toFixed(1)} ${zero}v${-h}` : '').join(''));
draw('gain', h => h > 0);
draw('loss', h => h < 0);
```
